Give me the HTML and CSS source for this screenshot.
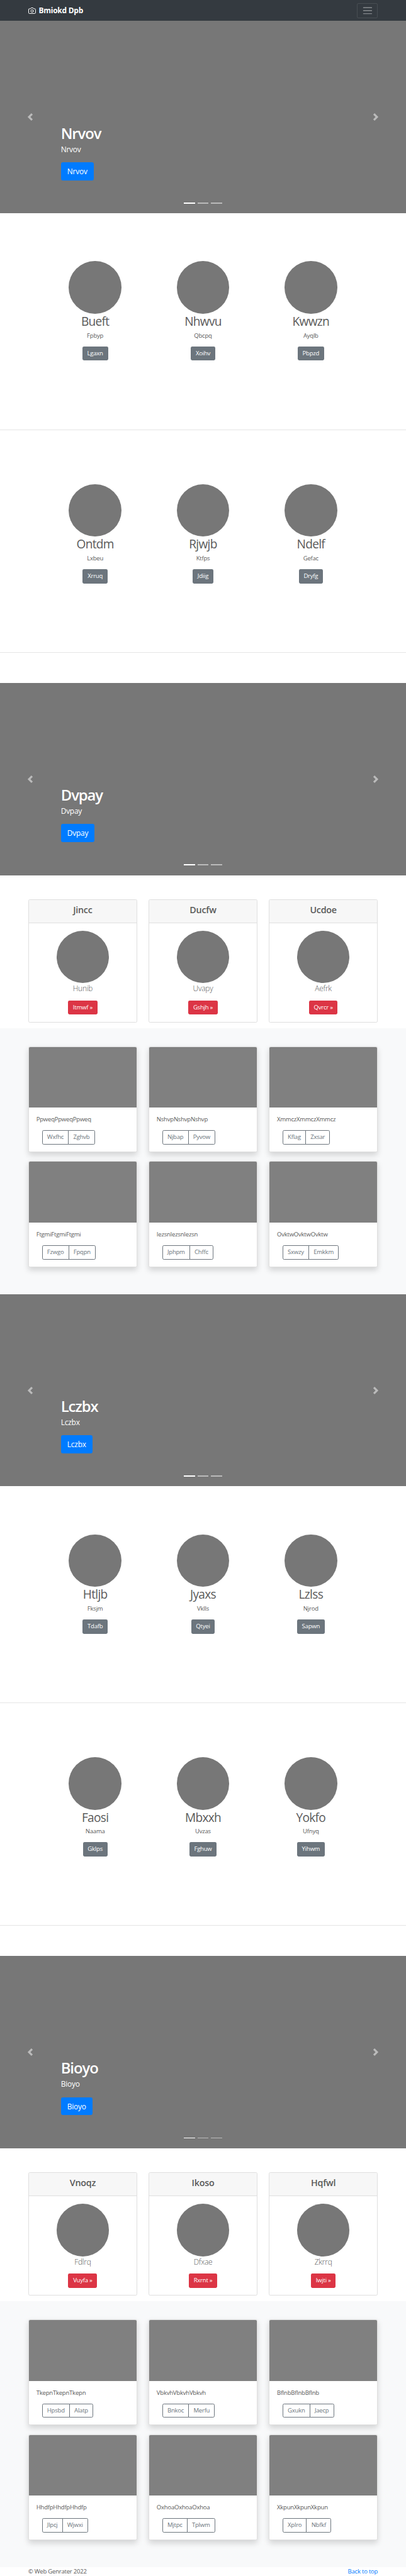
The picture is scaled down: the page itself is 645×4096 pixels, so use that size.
FILE: index.html
```html
<!DOCTYPE html>
<html lang="en">
<head>
<meta charset="utf-8">
<title>Bmiokd Dpb</title>
<link rel="stylesheet" href="styles.css">
</head>
<body>
<svg class="sprite" aria-hidden="true">
  <symbol id="prev" viewBox="0 0 8 8"><path fill="#fff" d="M5.25 0l-4 4 4 4 1.5-1.5L4.25 4l2.5-2.5L5.25 0z"/></symbol>
  <symbol id="next" viewBox="0 0 8 8"><path fill="#fff" d="M2.75 0l-1.5 1.5L3.75 4l-2.5 2.5L2.75 8l4-4-4-4z"/></symbol>
</svg>

<header class="navbar">
  <a class="brand" href="#">
    <svg class="brand-icon" viewBox="0 0 24 24" fill="none" stroke="#fff" stroke-width="2" stroke-linecap="round" stroke-linejoin="round"><path d="M23 19a2 2 0 0 1-2 2H3a2 2 0 0 1-2-2V8a2 2 0 0 1 2-2h4l2-3h6l2 3h4a2 2 0 0 1 2 2z"/><circle cx="12" cy="13" r="4"/></svg>
    <strong>Bmiokd Dpb</strong>
  </a>
  <button class="toggler" aria-label="Menu">
    <svg class="toggler-icon" viewBox="0 0 30 30" stroke="#fff" stroke-opacity=".5" stroke-width="2" stroke-linecap="round" stroke-miterlimit="10"><path d="M4 7h22M4 15h22M4 23h22"/></svg>
  </button>
</header>

<section class="carousel">
  <svg class="arrow arrow-prev"><use href="#prev"/></svg>
  <svg class="arrow arrow-next"><use href="#next"/></svg>
  <div class="caption"><h1>Nrvov</h1><p>Nrvov</p><a class="btn btn-lg">Nrvov</a></div>
  <div class="indicators"><i class="active"></i><i></i><i></i></div>
</section>

<section class="features">
  <div class="feature-block">
    <div class="feature-row">
      <div class="feature"><div class="circle"></div><h2>Bueft</h2><p>Fpbyp</p><a class="btn btn-gray">Lgaxn</a></div>
      <div class="feature"><div class="circle"></div><h2>Nhwvu</h2><p>Qbcpq</p><a class="btn btn-gray">Xoihv</a></div>
      <div class="feature"><div class="circle"></div><h2>Kwwzn</h2><p>Ayqlb</p><a class="btn btn-gray">Pbpzd</a></div>
    </div>
    <hr>
  </div>
  <div class="feature-block">
    <div class="feature-row">
      <div class="feature"><div class="circle"></div><h2>Ontdm</h2><p>Lxbeu</p><a class="btn btn-gray">Xrruq</a></div>
      <div class="feature"><div class="circle"></div><h2>Rjwjb</h2><p>Ktfps</p><a class="btn btn-gray">Jdiig</a></div>
      <div class="feature"><div class="circle"></div><h2>Ndelf</h2><p>Gefac</p><a class="btn btn-gray">Dryfg</a></div>
    </div>
    <hr>
  </div>
</section>

<section class="carousel">
  <svg class="arrow arrow-prev"><use href="#prev"/></svg>
  <svg class="arrow arrow-next"><use href="#next"/></svg>
  <div class="caption"><h1>Dvpay</h1><p>Dvpay</p><a class="btn btn-lg">Dvpay</a></div>
  <div class="indicators"><i class="active"></i><i></i><i></i></div>
</section>

<section class="deck">
  <div class="card"><h4>Jincc</h4><div class="card-main"><div class="circle"></div><p>Hunib</p><a class="btn btn-red">Itmwf »</a></div></div>
  <div class="card"><h4>Ducfw</h4><div class="card-main"><div class="circle"></div><p>Uvapy</p><a class="btn btn-red">Gshjh »</a></div></div>
  <div class="card"><h4>Ucdoe</h4><div class="card-main"><div class="circle"></div><p>Aefrk</p><a class="btn btn-red">Qvrcr »</a></div></div>
</section>

<section class="album">
  <article class="tile"><div class="thumb"></div><p>PpweqPpweqPpweq</p><div class="group"><a class="btn">Wxfhc</a><a class="btn">Zghvb</a></div></article>
  <article class="tile"><div class="thumb"></div><p>NshvpNshvpNshvp</p><div class="group"><a class="btn">Njbap</a><a class="btn">Pyvow</a></div></article>
  <article class="tile"><div class="thumb"></div><p>XmmczXmmczXmmcz</p><div class="group"><a class="btn">Kflag</a><a class="btn">Zxsar</a></div></article>
  <article class="tile"><div class="thumb"></div><p>FtgmiFtgmiFtgmi</p><div class="group"><a class="btn">Fzwgo</a><a class="btn">Fpqpn</a></div></article>
  <article class="tile"><div class="thumb"></div><p>IezsnIezsnIezsn</p><div class="group"><a class="btn">Jphpm</a><a class="btn">Chffc</a></div></article>
  <article class="tile"><div class="thumb"></div><p>OvktwOvktwOvktw</p><div class="group"><a class="btn">Sxwzy</a><a class="btn">Emkkm</a></div></article>
</section>

<section class="carousel">
  <svg class="arrow arrow-prev"><use href="#prev"/></svg>
  <svg class="arrow arrow-next"><use href="#next"/></svg>
  <div class="caption"><h1>Lczbx</h1><p>Lczbx</p><a class="btn btn-lg">Lczbx</a></div>
  <div class="indicators"><i class="active"></i><i></i><i></i></div>
</section>

<section class="features">
  <div class="feature-block">
    <div class="feature-row">
      <div class="feature"><div class="circle"></div><h2>Htljb</h2><p>Fksjm</p><a class="btn btn-gray">Tdafb</a></div>
      <div class="feature"><div class="circle"></div><h2>Jyaxs</h2><p>Vklls</p><a class="btn btn-gray">Qtyei</a></div>
      <div class="feature"><div class="circle"></div><h2>Lzlss</h2><p>Njrod</p><a class="btn btn-gray">Sapwn</a></div>
    </div>
    <hr>
  </div>
  <div class="feature-block">
    <div class="feature-row">
      <div class="feature"><div class="circle"></div><h2>Faosi</h2><p>Naama</p><a class="btn btn-gray">Gklps</a></div>
      <div class="feature"><div class="circle"></div><h2>Mbxxh</h2><p>Uvzas</p><a class="btn btn-gray">Fghuw</a></div>
      <div class="feature"><div class="circle"></div><h2>Yokfo</h2><p>Ufnyq</p><a class="btn btn-gray">Yihwm</a></div>
    </div>
    <hr>
  </div>
</section>

<section class="carousel">
  <svg class="arrow arrow-prev"><use href="#prev"/></svg>
  <svg class="arrow arrow-next"><use href="#next"/></svg>
  <div class="caption"><h1>Bioyo</h1><p>Bioyo</p><a class="btn btn-lg">Bioyo</a></div>
  <div class="indicators"><i class="active"></i><i></i><i></i></div>
</section>

<section class="deck">
  <div class="card"><h4>Vnoqz</h4><div class="card-main"><div class="circle"></div><p>Fdlrq</p><a class="btn btn-red">Vuyfa »</a></div></div>
  <div class="card"><h4>Ikoso</h4><div class="card-main"><div class="circle"></div><p>Dfxae</p><a class="btn btn-red">Rxrnt »</a></div></div>
  <div class="card"><h4>Hqfwl</h4><div class="card-main"><div class="circle"></div><p>Zkrrq</p><a class="btn btn-red">Iwjti »</a></div></div>
</section>

<section class="album">
  <article class="tile"><div class="thumb"></div><p>TkepnTkepnTkepn</p><div class="group"><a class="btn">Hpsbd</a><a class="btn">Alatp</a></div></article>
  <article class="tile"><div class="thumb"></div><p>VbkvhVbkvhVbkvh</p><div class="group"><a class="btn">Bnkoc</a><a class="btn">Merfu</a></div></article>
  <article class="tile"><div class="thumb"></div><p>BflnbBflnbBflnb</p><div class="group"><a class="btn">Gxukn</a><a class="btn">Jaecp</a></div></article>
  <article class="tile"><div class="thumb"></div><p>HhdfpHhdfpHhdfp</p><div class="group"><a class="btn">Jlpcj</a><a class="btn">Wjwxi</a></div></article>
  <article class="tile"><div class="thumb"></div><p>OxhoaOxhoaOxhoa</p><div class="group"><a class="btn">Mjtpc</a><a class="btn">Tplwm</a></div></article>
  <article class="tile"><div class="thumb"></div><p>XkpunXkpunXkpun</p><div class="group"><a class="btn">Xplro</a><a class="btn">Nbfkf</a></div></article>
</section>

<footer class="footer"><span>© Web Genrater 2022</span><a href="#">Back to top</a></footer>
</body>
</html>
```

FILE: styles.css
```css
/* 1rem = 10 design pixels */
html { font-size: 5.97px; }
*, *::before, *::after { box-sizing: border-box; }
body {
  margin: 0;
  background: #fff;
  color: #5a5a5a;
  font-family: "Open Sans", "Noto Sans", sans-serif;
  font-size: 1.6rem;
  line-height: 2.4rem;
  letter-spacing: -0.024em;
}
h1, h2, h4, p { margin: 0; }
a { text-decoration: none; }
.sprite { display: none; }

.navbar {
  height: 5.6rem;
  padding: 0 7.5rem;
  display: flex;
  align-items: center;
  justify-content: space-between;
  background: #343a40;
}
.brand {
  display: flex;
  align-items: center;
  gap: 0.8rem;
  color: #fff;
  font-size: 2rem;
  line-height: 3rem;
}
.brand-icon { width: 2rem; height: 2rem; }
.toggler {
  width: 5.6rem;
  height: 4rem;
  padding: 0;
  display: flex;
  align-items: center;
  justify-content: center;
  background: transparent;
  border: 1px solid rgba(255, 255, 255, 0.1);
  border-radius: 0.4rem;
}
.toggler-icon { width: 3rem; height: 3rem; }

.btn {
  display: inline-block;
  height: 3.8rem;
  padding: 0 1.3rem;
  border-radius: 0.4rem;
  line-height: 3.8rem;
  color: #fff;
  white-space: nowrap;
}
.btn-lg {
  height: 4.8rem;
  padding: 0 1.7rem;
  font-size: 2rem;
  line-height: 4.8rem;
  border-radius: 0.5rem;
  background: #007bff;
}
.btn-gray { background: #6c757d; }
.btn-red { background: #dc3545; }

.circle {
  width: 14rem;
  height: 14rem;
  border-radius: 50%;
  background: #777;
}

.carousel {
  position: relative;
  height: 51.2rem;
  padding: 0 16.2rem 2.6rem;
  display: flex;
  flex-direction: column;
  justify-content: flex-end;
  background: #777;
  color: #fff;
}
.arrow {
  position: absolute;
  top: 24.6rem;
  width: 2rem;
  height: 2rem;
  opacity: 0.5;
}
.arrow-prev { left: 7.1rem; }
.arrow-next { right: 7.1rem; }
.caption { padding-bottom: 5.9rem; }
.caption h1 {
  margin-bottom: 0.4rem;
  font-size: 4rem;
  font-weight: 600;
  line-height: 4.8rem;
  letter-spacing: -0.045em;
}
.caption p {
  margin-bottom: 1.9rem;
  font-size: 2rem;
  line-height: 3rem;
}
.caption .btn { display: table; }
.indicators {
  display: flex;
  justify-content: center;
  gap: 0.6rem;
}
.indicators i {
  width: 3rem;
  height: 0.3rem;
  background: rgba(255, 255, 255, 0.5);
}
.indicators .active { background: #fff; }

.features { padding-top: 6.4rem; }
.feature-block {
  height: 59.35rem;
  padding-top: 6.4rem;
  display: flex;
  flex-direction: column;
}
.feature-row {
  display: grid;
  grid-template-columns: repeat(3, 28.7rem);
  justify-content: center;
}
.feature {
  display: flex;
  flex-direction: column;
  align-items: center;
}
.feature h2 {
  margin: 0.15rem 0 0.65rem;
  font-size: 3.2rem;
  font-weight: 400;
  line-height: 3.84rem;
  letter-spacing: -0.036em;
}
.feature p { margin-bottom: 1.6rem; }
hr {
  width: 100%;
  margin: auto 0 8rem;
  border: 0;
  border-top: 1px solid rgba(0, 0, 0, 0.1);
}

.deck {
  padding: 6.4rem 7.5rem 1.6rem;
  display: grid;
  grid-template-columns: repeat(3, 1fr);
  gap: 3rem;
}
.card {
  height: 32.8rem;
  border: 1px solid #dfdfdf;
  border-radius: 0.4rem;
  text-align: center;
}
.card h4 {
  height: 6.2rem;
  padding-top: 1.2rem;
  border-bottom: 1px solid #dfdfdf;
  border-radius: 0.3rem 0.3rem 0 0;
  background: #f7f7f7;
  font-size: 2.4rem;
  font-weight: 600;
  line-height: 2.88rem;
}
.card-main {
  padding-top: 2rem;
  display: flex;
  flex-direction: column;
  align-items: center;
}
.card-main p {
  margin-bottom: 1.6rem;
  font-size: 2rem;
  font-weight: 300;
  line-height: 3rem;
}

.album {
  padding: 4.8rem 7.5rem 7.2rem;
  display: grid;
  grid-template-columns: repeat(3, 1fr);
  gap: 2.4rem 3rem;
  background: #f8f9fa;
}
.tile {
  height: 28.2rem;
  border: 1px solid #dfdfdf;
  border-radius: 0.4rem;
  background: #fff;
  box-shadow: 0 0.8rem 1.6rem rgba(0, 0, 0, 0.15);
}
.thumb {
  height: 16.2rem;
  border-radius: 0.3rem 0.3rem 0 0;
  background: #808080;
}
.tile p { padding: 2rem 2rem 1.6rem; line-height: 2.4rem; }
.group {
  display: flex;
  padding-left: 3.5rem;
}
.group .btn {
  padding: 0 1.2rem;
  border: 1px solid #6c757d;
  color: #6c757d;
  line-height: 3.5rem;
}
.group .btn:first-child { border-radius: 0.4rem 0 0 0.4rem; }
.group .btn:last-child { margin-left: -1px; border-radius: 0 0.4rem 0.4rem 0; }

.footer {
  height: 2.4rem;
  padding: 0 7.5rem;
  display: flex;
  justify-content: space-between;
}
.footer a { color: #007bff; }
```
